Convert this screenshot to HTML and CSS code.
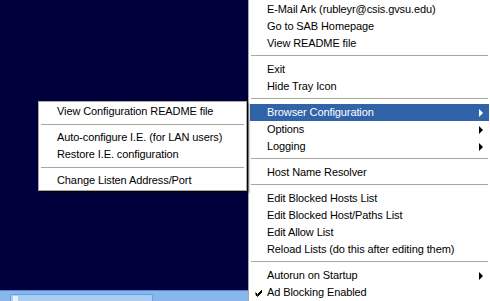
FILE: index.html
```html
<!DOCTYPE html>
<html lang="en">
<head>
    <meta charset="UTF-8">
    <meta name="viewport" content="width=device-width, initial-scale=1.0">
    <title>Ad Blocker tray menu</title>
    <link rel="stylesheet" href="styles.css">
</head>
<body>
    <div class="screen">
        <div class="desktop"></div>
        <div class="taskbar">
            <div class="task-btn"><span class="task-icon"></span></div>
        </div>

        <!-- tray menu -->
        <div class="menu main-menu">
            <div class="item">E-Mail Ark (rubleyr@csis.gvsu.edu)</div>
            <div class="item">Go to SAB Homepage</div>
            <div class="item">View README file</div>
            <div class="sep"></div>
            <div class="item">Exit</div>
            <div class="item">Hide Tray Icon</div>
            <div class="sep"></div>
            <div class="item active">Browser Configuration<span class="arrow"></span></div>
            <div class="item">Options<span class="arrow"></span></div>
            <div class="item">Logging<span class="arrow"></span></div>
            <div class="sep"></div>
            <div class="item">Host Name Resolver</div>
            <div class="sep"></div>
            <div class="item">Edit Blocked Hosts List</div>
            <div class="item">Edit Blocked Host/Paths List</div>
            <div class="item">Edit Allow List</div>
            <div class="item">Reload Lists (do this after editing them)</div>
            <div class="sep"></div>
            <div class="item">Autorun on Startup<span class="arrow"></span></div>
            <div class="item checked">
                <svg class="check" width="8" height="8" viewBox="0 0 8 8"><path d="M0.5 3.5 L2.5 5.5 L7 1 M0.5 4.5 L2.5 6.5 L7 2 M0.5 5.5 L2.5 7.5 L7 3" fill="none" stroke="#000" stroke-width="1"/></svg>
                Ad Blocking Enabled
            </div>
        </div>

        <!-- Browser Configuration submenu -->
        <div class="menu sub-menu">
            <div class="item">View Configuration README file</div>
            <div class="sep sub-sep"></div>
            <div class="item">Auto-configure I.E. (for LAN users)</div>
            <div class="item">Restore I.E. configuration</div>
            <div class="sep sub-sep"></div>
            <div class="item">Change Listen Address/Port</div>
        </div>
    </div>
</body>
</html>
```

FILE: styles.css
```css
body {
    margin: 0;
    padding: 0;
    font-family: 'Liberation Sans', Arial, sans-serif;
    font-size: 11px;
    overflow: hidden;
}
.screen {
    position: relative;
    width: 490px;
    height: 301px;
    display: flex;
    flex-direction: column;
    overflow: hidden;
}
.desktop {
    flex: 1;
    background-color: #00003c;
}
.taskbar {
    height: 7px;
    background-color: #86b6ea;
    border-top: 1px solid #4f86d2;
    padding: 3px 0 0 10px;
}
.task-btn {
    width: 143px;
    height: 8px;
    background-color: #a9cdf3;
    border: 1px solid #6a9ee0;
    border-radius: 2px 2px 0 0;
    padding: 1px 0 0 2px;
    box-sizing: border-box;
}
.task-icon {
    display: block;
    width: 5px;
    height: 5px;
    background-color: #e9f3fd;
}

/* menus */
.menu {
    position: absolute;
    background-color: #ffffff;
    border: 1px solid #aca899;
    padding: 1px;
}
.main-menu {
    left: 248px;
    top: -1px;
    width: 239px;
}
.sub-menu {
    left: 38px;
    top: 101px;
    width: 205px;
    box-shadow: 2px 2px 2px rgba(0, 0, 0, 0.45);
}
.item {
    position: relative;
    height: 17px;
    line-height: 17px;
    padding-left: 17px;
    color: #000000;
    white-space: nowrap;
    letter-spacing: -0.1px;
}
.item.active {
    background-color: #3163a8;
    color: #ffffff;
}
.arrow {
    position: absolute;
    right: 6px;
    top: 5px;
    width: 0;
    height: 0;
    border-top: 4px solid transparent;
    border-bottom: 4px solid transparent;
    border-left: 4px solid #000000;
}
.item.active .arrow {
    border-left-color: #ffffff;
}
.check {
    position: absolute;
    left: 5px;
    top: 5px;
}
.sep {
    height: 1px;
    background-color: #aca899;
    margin: 3px 1px 5px;
}
.sub-sep {
    margin: 4px 1px 4px;
}
```
